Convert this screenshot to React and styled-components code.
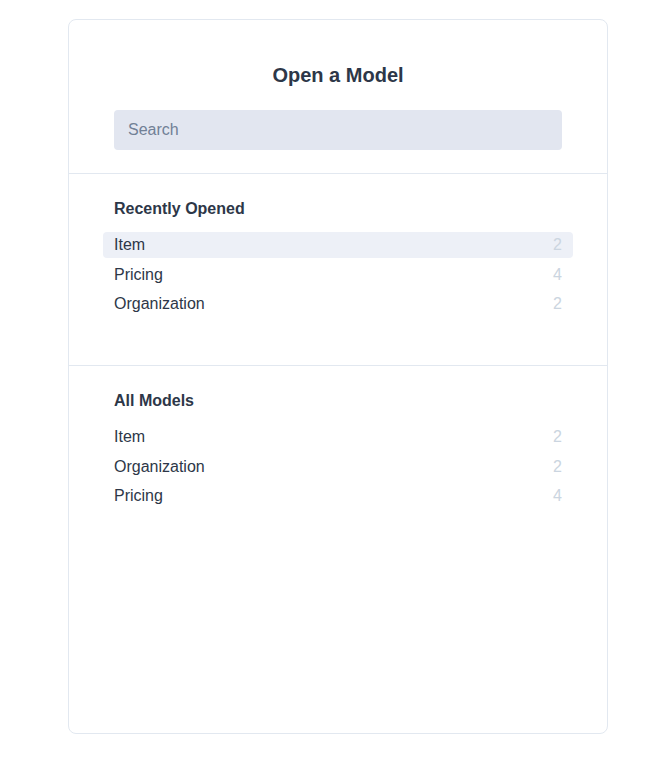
import React from 'react';
import styled, { createGlobalStyle } from 'styled-components';

const GlobalStyle = createGlobalStyle`
  body {
    margin: 0;
    background: #ffffff;
    font-family: "Liberation Sans", Arial, sans-serif;
    color: #2d3748;
  }
`;

const recent = [
  { name: 'Item', count: 2, active: true },
  { name: 'Pricing', count: 4 },
  { name: 'Organization', count: 2 },
];

const all = [
  { name: 'Item', count: 2 },
  { name: 'Organization', count: 2 },
  { name: 'Pricing', count: 4 },
];

const App = () => (
  <>
    <GlobalStyle />
    <Card>
      <Header>
        <Title>Open a Model</Title>
        <Search placeholder='Search' />
      </Header>
      <Section>
        <Heading>Recently Opened</Heading>
        <List>
          {recent.map((m) => (
            <Row key={m.name} active={m.active}>
              <span>{m.name}</span>
              <Count>{m.count}</Count>
            </Row>
          ))}
        </List>
      </Section>
      <Section>
        <Heading>All Models</Heading>
        <List>
          {all.map((m) => (
            <Row key={m.name}>
              <span>{m.name}</span>
              <Count>{m.count}</Count>
            </Row>
          ))}
        </List>
      </Section>
    </Card>
  </>
);

const Card = styled.div`
  box-sizing: border-box;
  width: 540px;
  height: 715px;
  margin: 19px 0 0 68px;
  border: 1px solid #e2e8f0;
  border-radius: 8px;
  background: #fff;
  display: flex;
  flex-direction: column;
`;
const Header = styled.div`
  padding: 40px 45px 23px;
  display: flex;
  flex-direction: column;
  align-items: center;
  gap: 20px;
  border-bottom: 1px solid #e2e8f0;
`;
const Title = styled.h1`
  margin: 0;
  font-size: 20px;
  line-height: 30px;
  font-weight: 700;
  color: #2d3748;
`;
const Search = styled.input`
  box-sizing: border-box;
  width: 100%;
  height: 40px;
  border: none;
  border-radius: 4px;
  background: #e2e6f0;
  padding: 0 14px;
  font-family: inherit;
  font-size: 16px;
  color: #2d3748;
  outline: none;
  &::placeholder {
    color: #718096;
  }
`;
const Section = styled.section`
  padding: 23px 45px 48px;
  & + & {
    border-top: 1px solid #e2e8f0;
  }
`;
const Heading = styled.h2`
  margin: 0 0 11px;
  font-size: 16px;
  line-height: 24px;
  font-weight: 700;
  color: #2d3748;
`;
const List = styled.ul`
  list-style: none;
  margin: 0 -11px;
  padding: 0;
  display: flex;
  flex-direction: column;
  gap: 3.5px;
`;
const Row = styled.li`
  display: flex;
  justify-content: space-between;
  align-items: center;
  height: 26px;
  padding: 0 11px;
  border-radius: 4px;
  font-size: 16px;
  color: #2d3748;
  background: ${({ active }) => (active ? '#edf0f7' : 'transparent')};
`;
const Count = styled.span`
  color: #cbd5e0;
`;

export default App;
